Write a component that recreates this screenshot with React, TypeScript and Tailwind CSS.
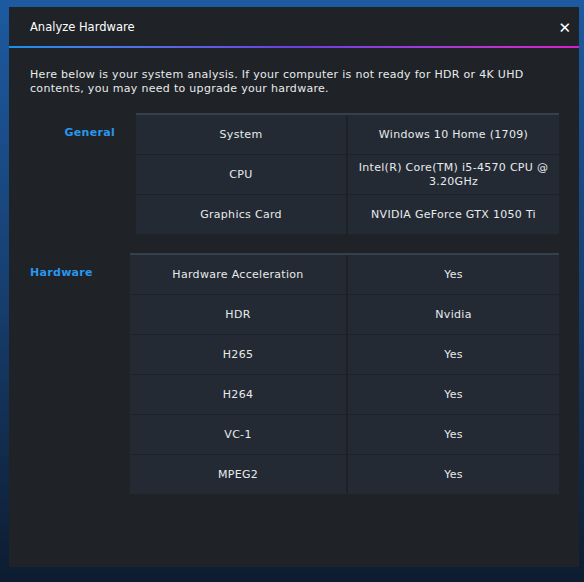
const general: [string, React.ReactNode][] = [
  ["System", "Windows 10 Home (1709)"],
  [
    "CPU",
    <>
      Intel(R) Core(TM) i5-4570 CPU @
      <br />
      3.20GHz
    </>,
  ],
  ["Graphics Card", "NVIDIA GeForce GTX 1050 Ti"],
];

const hardware: [string, string][] = [
  ["Hardware Acceleration", "Yes"],
  ["HDR", "Nvidia"],
  ["H265", "Yes"],
  ["H264", "Yes"],
  ["VC-1", "Yes"],
  ["MPEG2", "Yes"],
];

// ── Table ─────────────────────────────────────────────────────────────────────

function InfoTable({ rows, firstWidth }: { rows: [string, React.ReactNode][]; firstWidth: string }) {
  return (
    <div className="flex flex-col border-t-2 border-[#34404d] bg-[#1d2227] gap-px">
      {rows.map(([label, value], i) => (
        <div key={i} className="flex h-[39px] gap-[2px] leading-[14px]">
          <div className={`${firstWidth} flex items-center justify-center bg-[#232a34] text-center`}>
            {label}
          </div>
          <div className="flex w-[211px] items-center justify-center bg-[#232a34] text-center">
            {value}
          </div>
        </div>
      ))}
    </div>
  );
}

export default function App() {
  return (
    <div className="h-[582px] w-[584px] bg-gradient-to-b from-[#1d5aa0] via-[#163f70] to-[#0d1c30] pl-[9px] pr-[5px] pt-[7px] pb-[15px] font-['DejaVu_Sans',sans-serif] text-[11px] tracking-[0.3px] text-[#e8eaec]">
      <div className="flex h-full flex-col bg-[#1f2327]">
        {/* Header */}
        <div className="flex h-[39px] items-center justify-between pl-[21px] pr-[8px] pt-[3px] text-[11.5px] tracking-normal text-white">
          <span>Analyze Hardware</span>
          <span className="text-[15px] font-bold leading-none">✕</span>
        </div>
        <div className="h-[2px] bg-gradient-to-r from-[#1590e6] via-[#6a3ee0] to-[#d81ccc]" />

        <p className="mt-[20px] px-[21px] leading-[14px]">
          Here below is your system analysis. If your computer is not ready for HDR or 4K UHD contents, you may need to
          upgrade your hardware.
        </p>

        {/* General */}
        <div className="mt-[17px] flex">
          <div className="w-[106px] pt-[12px] text-right font-bold text-[#2a96ec]">General</div>
          <div className="ml-[21px]">
            <InfoTable rows={general} firstWidth="w-[210px]" />
          </div>
        </div>

        {/* Hardware */}
        <div className="mt-[19px] flex">
          <div className="w-[121px] pl-[21px] pt-[12px] font-bold text-[#2a96ec]">Hardware</div>
          <div>
            <InfoTable rows={hardware} firstWidth="w-[216px]" />
          </div>
        </div>
      </div>
    </div>
  );
}
